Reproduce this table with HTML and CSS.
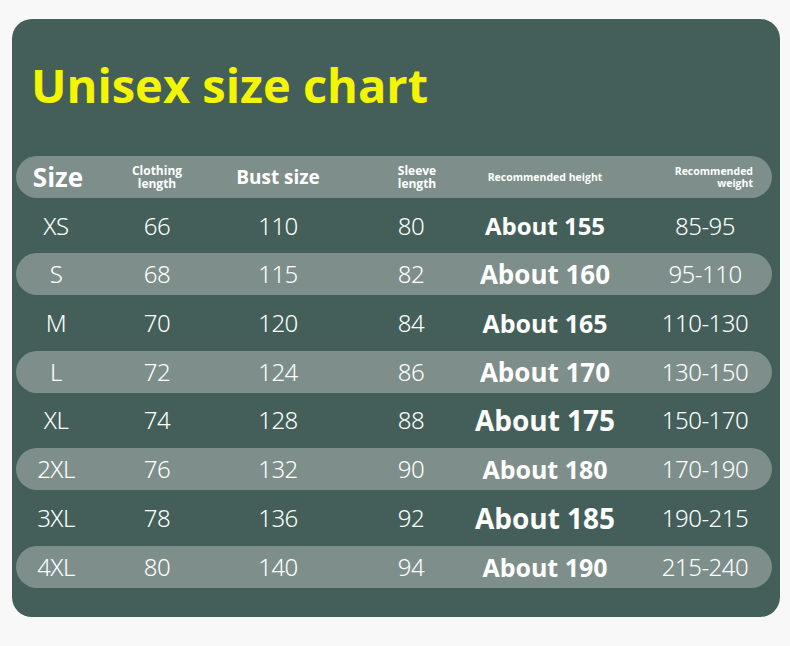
FILE: index.html
```html
<!DOCTYPE html>
<html lang="en">
<head>
<meta charset="utf-8">
<title>Unisex size chart</title>
<link rel="stylesheet" href="styles.css">
</head>
<body>
<div class="card">
  <h1 class="title">Unisex size chart</h1>
  <div class="table">
    <div class="row band head">
      <div class="cell h-size">Size</div>
      <div class="cell h-small">Clothing<br>length</div>
      <div class="cell h-bust">Bust size</div>
      <div class="cell h-small h-sleeve">Sleeve<br>length</div>
      <div class="cell h-tiny">Recommended height</div>
      <div class="cell h-tiny h-weight">Recommended<br>weight</div>
    </div>
    <div class="row">
      <div class="cell num">XS</div><div class="cell num">66</div><div class="cell num">110</div><div class="cell num">80</div>
      <div class="cell about s24">About 155</div><div class="cell num w">85-95</div>
    </div>
    <div class="row band">
      <div class="cell num">S</div><div class="cell num">68</div><div class="cell num">115</div><div class="cell num">82</div>
      <div class="cell about s26">About 160</div><div class="cell num w">95-110</div>
    </div>
    <div class="row">
      <div class="cell num">M</div><div class="cell num">70</div><div class="cell num">120</div><div class="cell num">84</div>
      <div class="cell about s25">About 165</div><div class="cell num w">110-130</div>
    </div>
    <div class="row band">
      <div class="cell num">L</div><div class="cell num">72</div><div class="cell num">124</div><div class="cell num">86</div>
      <div class="cell about s26">About 170</div><div class="cell num w">130-150</div>
    </div>
    <div class="row">
      <div class="cell num">XL</div><div class="cell num">74</div><div class="cell num">128</div><div class="cell num">88</div>
      <div class="cell about s28">About 175</div><div class="cell num w">150-170</div>
    </div>
    <div class="row band">
      <div class="cell num">2XL</div><div class="cell num">76</div><div class="cell num">132</div><div class="cell num">90</div>
      <div class="cell about s25">About 180</div><div class="cell num w">170-190</div>
    </div>
    <div class="row">
      <div class="cell num">3XL</div><div class="cell num">78</div><div class="cell num">136</div><div class="cell num">92</div>
      <div class="cell about s28">About 185</div><div class="cell num w">190-215</div>
    </div>
    <div class="row band">
      <div class="cell num">4XL</div><div class="cell num">80</div><div class="cell num">140</div><div class="cell num">94</div>
      <div class="cell about s25">About 190</div><div class="cell num w">215-240</div>
    </div>
  </div>
</div>
</body>
</html>
```
FILE: styles.css
```css
html, body {
  margin: 0;
  padding: 0;
}
body {
  background: #f8f8f8;
  width: 790px;
  height: 646px;
  overflow: hidden;
  font-family: "Open Sans", "Noto Sans", sans-serif;
  color: #ffffff;
}
.card {
  box-sizing: border-box;
  margin: 19px 0 0 12px;
  width: 768px;
  height: 598px;
  border-radius: 20px;
  background: #445f5a;
  padding-top: 43px;
}
.title {
  margin: 0 0 47px 0;
  padding-left: 19px;
  font-family: "Open Sans", sans-serif;
  font-weight: 700;
  font-size: 47px;
  line-height: 47px;
  color: #f4f500;
}
.table {
  margin-left: 4px;
  width: 756px;
  display: flex;
  flex-direction: column;
  gap: 6.7px;
}
.row {
  height: 42px;
  border-radius: 21px;
  display: grid;
  grid-template-columns: 80px 122px 120px 146px 122px 1fr;
  align-items: center;
}
.band {
  background: #7e8f8b;
}
.cell {
  display: flex;
  flex-direction: column;
  align-items: center;
  text-align: center;
  white-space: nowrap;
}
.num {
  font-family: "Noto Sans", "Open Sans", sans-serif;
  font-weight: 350;
  font-size: 24px;
  letter-spacing: -0.5px;
  line-height: 42px;
}
.w {
  padding-left: 32px;
}
.about {
  font-family: "Open Sans", sans-serif;
  font-weight: 700;
  line-height: 42px;
}
.s24 { font-size: 24px; }
.s25 { font-size: 25px; }
.s26 { font-size: 26px; }
.s28 { font-size: 28px; }
.head .cell {
  font-family: "Open Sans", sans-serif;
  font-weight: 700;
}
.h-size {
  font-size: 26px;
  line-height: 42px;
  padding-left: 4px;
}
.h-bust {
  font-size: 19px;
  line-height: 42px;
}
.h-small {
  font-size: 12px;
  line-height: 13px;
}
.h-sleeve {
  padding-left: 12px;
}
.h-tiny {
  font-size: 10.5px;
  line-height: 12px;
}
.h-weight {
  align-items: flex-end;
  text-align: right;
  padding-right: 19px;
}
```
